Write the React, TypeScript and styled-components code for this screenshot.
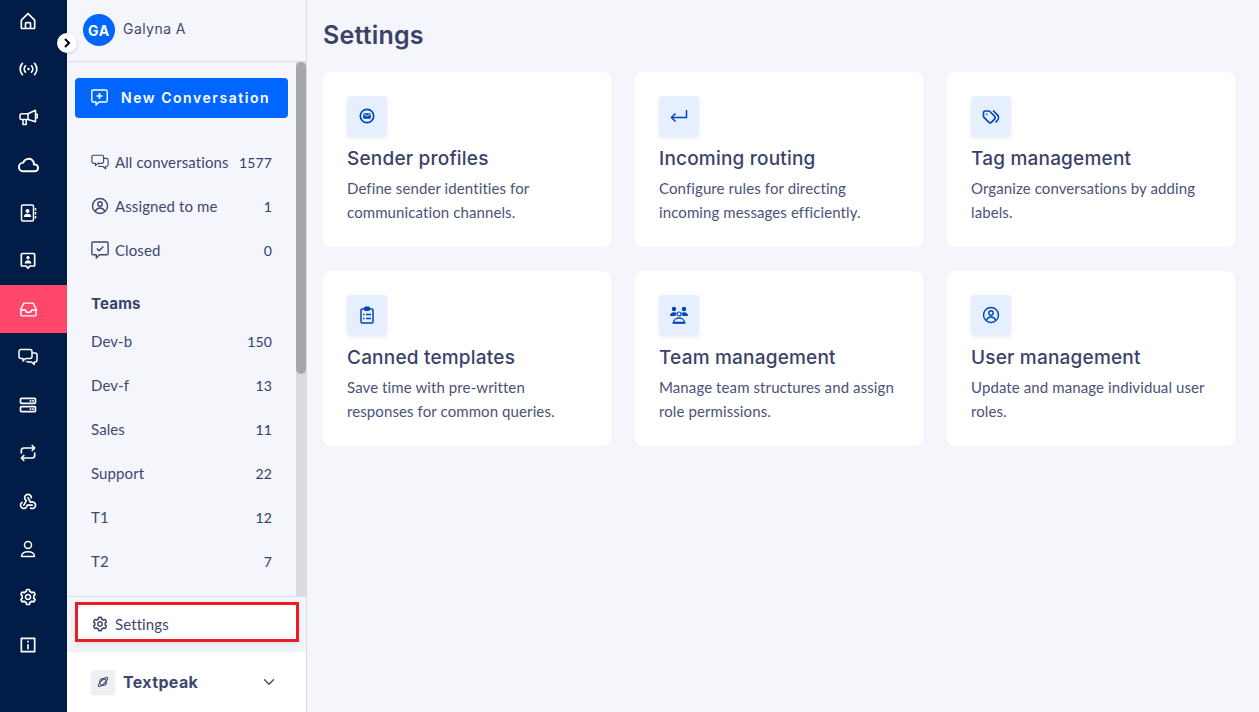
import React from 'react';
import styled, { createGlobalStyle } from 'styled-components';
import { ChevronDown } from 'lucide-react';
import { BiCog, BiHomeAlt, BiInfoSquare, BiServer, BiUserPin } from 'react-icons/bi';
import { TbCloud, TbRepeat, TbTags, TbWebhook } from 'react-icons/tb';

const HEADING = '"Inter", "Liberation Sans", sans-serif';
const BODY = '"Lato", "Noto Sans", sans-serif';
const INK = '#3f4770';

const GlobalStyle = createGlobalStyle`
  html, body { margin: 0; height: 100%; overflow: hidden; }
  * { box-sizing: border-box; }
  body { font-family: ${BODY}; color: ${INK}; background: #f4f6fb; }
`;

const Page = styled.div`
  display: flex;
  width: 100%;
  height: 712px;
  overflow: hidden;
`;

// left dark rail
const Rail = styled.nav`
  flex: 0 0 67px;
  background: #001c47;
  overflow: hidden;
`;

const RailList = styled.div`
  display: flex;
  flex-direction: column;
  margin-top: -3px;
`;

const RailItem = styled.div<{ $active?: boolean }>`
  display: flex;
  align-items: center;
  justify-content: center;
  height: 48px;
  padding-right: 11px;
  color: #fff;
  font-size: 20px;
  background: ${(p) => (p.$active ? '#ff4769' : 'transparent')};
`;

// conversations sidebar
const Sidebar = styled.aside`
  position: relative;
  flex: 0 0 240px;
  display: flex;
  flex-direction: column;
  height: 712px;
  border-right: 1px solid #d8dcea;
`;

const Toggle = styled.div`
  position: absolute;
  left: -10px;
  top: 33px;
  width: 20px;
  height: 20px;
  border-radius: 50%;
  background: #fff;
  color: #000;
  display: flex;
  align-items: center;
  justify-content: center;
  box-shadow: 0 1px 3px rgba(0, 0, 0, 0.2);
`;

const Profile = styled.div`
  flex: 0 0 62px;
  display: flex;
  align-items: flex-start;
  gap: 8px;
  padding: 14px 16px 0;
  border-bottom: 1px solid #d8dbe5;
`;

const Avatar = styled.div`
  width: 32px;
  height: 32px;
  border-radius: 50%;
  background: #0066ff;
  color: #fff;
  font: 700 14px ${HEADING};
  letter-spacing: 0.8px;
  display: flex;
  align-items: center;
  justify-content: center;
`;

const ProfileName = styled.span`
  font: 400 14px/30px ${HEADING};
  letter-spacing: 0.45px;
`;

const Scroller = styled.div`
  position: relative;
  flex: 1;
  min-height: 0;
  overflow: hidden;
  padding: 16px 8px 0;
`;

const ScrollTrack = styled.div`
  position: absolute;
  top: 0;
  right: 0;
  bottom: 0;
  width: 10px;
  background: #dadce2;
`;

const ScrollThumb = styled.div`
  height: 312px;
  border-radius: 6px;
  background: #a6a7ac;
`;

const NewButton = styled.button`
  display: flex;
  align-items: center;
  gap: 13px;
  width: 213px;
  height: 40px;
  padding: 0 16px 2px;
  border: 0;
  border-radius: 4px;
  background: #0066ff;
  color: #fff;
  font: 600 14px ${HEADING};
  letter-spacing: 1.55px;
  white-space: nowrap;
  svg { flex: none; }
`;

const NavGroup = styled.div`
  display: flex;
  flex-direction: column;
  margin-top: 22px;
`;

const NavRow = styled.div`
  display: flex;
  align-items: center;
  height: 44px;
  padding: 0 16px;
  font-size: 15px;
  letter-spacing: 0.1px;
  color: ${INK};
  width: 213px;
  svg { margin-right: 6px; flex: none; }
`;

const NavLabel = styled.span`
  flex: 1;
  white-space: nowrap;
`;

const Count = styled.span`
  font-size: 14px;
  color: #34406b;
`;

const TeamsTitle = styled.div`
  font: 700 15px/20px ${HEADING};
  letter-spacing: 0.2px;
  color: #39416a;
  padding: 0 16px;
  margin: 22px 0 5px;
`;

const SettingsPanel = styled.div`
  flex: 0 0 56px;
  background: #f4f6fb;
  padding: 5px 7px 0 8px;
  border-top: 1px solid #dcdfee;
`;

const SettingsBox = styled.div`
  display: flex;
  align-items: center;
  height: 40px;
  padding: 3px 13px 0;
  background: #fff;
  border: 3px solid #ed1c24;
  box-shadow: 0 3px 8px rgba(70, 80, 130, 0.1);
  font-size: 15px;
  letter-spacing: 0.1px;
  color: ${INK};
  svg { font-size: 18px; margin-right: 6px; }
`;

const Workspace = styled.div`
  flex: 0 0 60px;
  display: flex;
  align-items: center;
  background: #fff;
  padding: 0 28px 0 24px;
  box-shadow: 0 -1px 2px rgba(70, 80, 130, 0.06);
`;

const WorkspaceIcon = styled.div`
  width: 24px;
  height: 24px;
  border-radius: 4px;
  background: #eef0f4;
  color: #3f4770;
  display: flex;
  align-items: center;
  justify-content: center;
  margin-right: 8px;
  box-shadow: 0 1px 2px rgba(70, 80, 130, 0.12);
`;

const WorkspaceName = styled.span`
  flex: 1;
  font: 700 16px ${HEADING};
  letter-spacing: 0.35px;
  color: #3f4770;
`;

// settings area
const Main = styled.main`
  flex: 1;
  min-width: 0;
  padding: 17px 24px 0 16px;
`;

const Title = styled.h1`
  margin: 0 0 19px;
  font: 600 25px/36px ${HEADING};
  letter-spacing: 0.2px;
  color: #3b4268;
`;

const CardGrid = styled.div`
  display: grid;
  grid-template-columns: repeat(3, 288px);
  grid-auto-rows: 175px;
  gap: 24px;
`;

const Card = styled.section`
  background: #fff;
  border-radius: 8px;
  padding: 24px;
`;

const CardIcon = styled.div`
  width: 40px;
  height: 40px;
  border-radius: 4px;
  background: #e5efff;
  color: #0047b3;
  display: flex;
  align-items: center;
  justify-content: center;
  box-shadow: 0 2px 4px rgba(60, 80, 130, 0.12);
  margin-bottom: 9px;
  font-size: 20px;
`;

const CardTitle = styled.h2`
  margin: 0 0 4px;
  padding-top: 1px;
  font: 500 19px/26px ${HEADING};
  letter-spacing: 0.2px;
  color: #3b4268;
  white-space: nowrap;
`;

const CardText = styled.p`
  margin: 0;
  font-size: 15px;
  line-height: 24px;
  letter-spacing: 0.1px;
  color: #4a527a;
`;

const BroadcastIcon = () => (
  <svg width="19" height="14" viewBox="0 0 20 14" fill="none" stroke="currentColor" strokeWidth="1.800" strokeLinecap="round">
    <path d="M6.800 3.800a4.600 4.600 0 0 0 0 6.400M13.200 3.800a4.600 4.600 0 0 1 0 6.400" />
    <path d="M3.600 1a8.800 8.800 0 0 0 0 12M16.400 1a8.800 8.800 0 0 1 0 12" />
    <circle cx="10" cy="7" r="1.300" fill="currentColor" stroke="none" />
  </svg>
);

const MegaphoneIcon = () => (
  <svg width="19" height="17" viewBox="0 0 19 17" fill="none" stroke="currentColor" strokeWidth="1.500" strokeLinejoin="round">
    <path d="M2.500 4.800h6.500L16.500 1.200v11.600L9 10.500H2.500a1.500 1.500 0 0 1-1.500-1.500V6.300a1.500 1.500 0 0 1 1.500-1.500z" />
    <path d="M9 4.800v5.700M4 10.500v5h3.200v-5M16.500 5.200h1.800v3.600h-1.800" />
  </svg>
);

const ContactBookIcon = () => (
  <svg width="17" height="18" viewBox="0 0 17 18" fill="none" stroke="currentColor" strokeWidth="1.500">
    <rect x="1.500" y="1" width="12" height="16" rx="1.500" />
    <path d="M15.500 4v2.500M15.500 8v2.500M15.500 12v2.500" />
    <circle cx="7.500" cy="7" r="2" fill="currentColor" stroke="none" />
    <path d="M3.800 13c0-2 1.600-3.200 3.700-3.200s3.700 1.200 3.700 3.200z" fill="currentColor" stroke="none" />
  </svg>
);

const InboxIcon = ({ size = 17 }: { size?: number }) => (
  <svg width={size} height={size} viewBox="0 0 20 18" fill="none" stroke="currentColor" strokeWidth="1.700" strokeLinejoin="round">
    <path d="M4.500 1.500h11l3.500 7v6.500a1.500 1.500 0 0 1-1.500 1.500h-15A1.500 1.500 0 0 1 1 15V8.500z" />
    <path d="M1 9.500h5.500c0 2 1.500 3 3.500 3s3.500-1 3.500-3H19" />
  </svg>
);

const BubblesIcon = ({ size = 20, sw = 1.5 }: { size?: number; sw?: number }) => (
  <svg width={size} height={size} viewBox="0 0 20 18" fill="none" stroke="currentColor" strokeWidth={sw} strokeLinejoin="round">
    <path d="M3 1.500h9a2 2 0 0 1 2 2v5a2 2 0 0 1-2 2H7.500L5 13v-2.500H3a2 2 0 0 1-2-2v-5a2 2 0 0 1 2-2z" />
    <path d="M14.500 5H17a2 2 0 0 1 2 2v5a2 2 0 0 1-2 2h-.8v2.500L13.500 14H10a2 2 0 0 1-1.700-1" />
  </svg>
);

const PersonIcon = () => (
  <svg width="18" height="18" viewBox="0 0 18 18" fill="none" stroke="currentColor" strokeWidth="1.500" strokeLinejoin="round">
    <circle cx="9" cy="5" r="3.500" />
    <path d="M2.500 16.500c0-3 2.800-4.800 6.500-4.800s6.500 1.800 6.500 4.800z" />
  </svg>
);

const BubblePlusIcon = () => (
  <svg width="17" height="17" viewBox="0 0 17 17" fill="none" stroke="currentColor" strokeWidth="1.400" strokeLinejoin="round">
    <path d="M2 1h13a1.200 1.200 0 0 1 1.200 1.200v9.600a1.200 1.200 0 0 1-1.200 1.200H8l-3 3v-3H2a1.200 1.200 0 0 1-1.200-1.200V2.200A1.200 1.200 0 0 1 2 1z" />
    <path d="M8.500 4v6M5.500 7h6" strokeWidth="1.600" />
  </svg>
);

const BubbleCheckIcon = () => (
  <svg width="18" height="18" viewBox="0 0 17 17" fill="none" stroke="currentColor" strokeWidth="1.300" strokeLinejoin="round">
    <path d="M2 1h13a1.200 1.200 0 0 1 1.200 1.200v9.600a1.200 1.200 0 0 1-1.200 1.200H8l-3 3v-3H2a1.200 1.200 0 0 1-1.200-1.200V2.200A1.200 1.200 0 0 1 2 1z" />
    <path d="M5.500 7l2.200 2.200 4-4" />
  </svg>
);

const PlanetIcon = () => (
  <svg width="14" height="14" viewBox="0 0 14 14" fill="none" stroke="currentColor" strokeWidth="1.100">
    <circle cx="7" cy="7" r="3.400" />
    <ellipse cx="7" cy="7" rx="6.200" ry="1.800" transform="rotate(-45 7 7)" />
  </svg>
);

const MailCircle = () => (
  <svg width="16" height="16" viewBox="0 0 16 16" fill="none">
    <circle cx="8" cy="8" r="6.700" stroke="currentColor" strokeWidth="1.700" />
    <rect x="4.200" y="5.200" width="7.600" height="5.600" rx="0.800" fill="currentColor" />
    <path d="M4.600 6l3.400 2.200L11.400 6" stroke="#e5efff" strokeWidth="0.900" />
  </svg>
);

const ReturnArrow = () => (
  <svg width="18" height="14" viewBox="0 0 18 14" fill="none" stroke="currentColor" strokeWidth="1.500">
    <path d="M16.500 1v7.500H1.500" />
    <path d="M5.500 4.500l-4 4 4 4" />
  </svg>
);

const ClipboardIcon = () => (
  <svg width="14" height="18" viewBox="0 0 14 18" fill="none" stroke="currentColor" strokeWidth="1.500">
    <rect x="1" y="3" width="12" height="14" rx="1.200" />
    <rect x="4.500" y="1" width="5" height="3.500" rx="0.800" fill="currentColor" strokeWidth="1" />
    <path d="M6 8.500h5M6 12.500h5M3 8.500h1.500M3 12.500h1.500" strokeWidth="1.300" />
  </svg>
);

const TeamIcon = () => (
  <svg width="20" height="18" viewBox="0 0 20 18" fill="currentColor">
    <circle cx="5" cy="3" r="2.200" />
    <circle cx="15" cy="3" r="2.200" />
    <path d="M1 10c0-2.400 1.600-3.800 4-3.800 1.100 0 2 .3 2.800.9A3.600 3.600 0 0 0 6.500 10z" />
    <path d="M19 10c0-2.400-1.600-3.800-4-3.800-1.100 0-2 .3-2.800.9a3.600 3.600 0 0 1 1.300 2.900z" />
    <circle cx="10" cy="8" r="2" fill="none" stroke="currentColor" strokeWidth="1.200" />
    <path d="M4.500 17c0-3 2.400-5 5.500-5s5.500 2 5.500 5z" fill="none" stroke="currentColor" strokeWidth="1.300" />
    <rect x="3.500" y="15.800" width="13" height="1.700" rx=".5" />
  </svg>
);

const UserRing = () => (
  <svg width="18" height="18" viewBox="0 0 18 18" fill="none" stroke="currentColor" strokeWidth="1.400">
    <circle cx="9" cy="9" r="7.500" />
    <circle cx="9" cy="7" r="2.200" />
    <path d="M4.500 14c.6-2 2.300-3 4.500-3s3.900 1 4.500 3" />
  </svg>
);

const railIcons = [
  <BiHomeAlt />,
  <BroadcastIcon />,
  <MegaphoneIcon />,
  <TbCloud size={23} />,
  <ContactBookIcon />,
  <BiUserPin />,
  <InboxIcon />,
  <BubblesIcon />,
  <BiServer />,
  <TbRepeat />,
  <TbWebhook />,
  <PersonIcon />,
  <BiCog />,
  <BiInfoSquare />,
];

const conversationRows = [
  { icon: <BubblesIcon size={18} sw={1.300} />, label: 'All conversations', count: 1577 },
  { icon: <UserRing />, label: 'Assigned to me', count: 1 },
  { icon: <BubbleCheckIcon />, label: 'Closed', count: 0 },
];

const teamRows = [
  { label: 'Dev-b', count: 150 },
  { label: 'Dev-f', count: 13 },
  { label: 'Sales', count: 11 },
  { label: 'Support', count: 22 },
  { label: 'T1', count: 12 },
  { label: 'T2', count: 7 },
];

const cards = [
  { icon: <MailCircle />, title: 'Sender profiles', text: 'Define sender identities for communication channels.' },
  { icon: <ReturnArrow />, title: 'Incoming routing', text: 'Configure rules for directing incoming messages efficiently.' },
  { icon: <TbTags />, title: 'Tag management', text: 'Organize conversations by adding labels.' },
  { icon: <ClipboardIcon />, title: 'Canned templates', text: 'Save time with pre-written responses for common queries.' },
  { icon: <TeamIcon />, title: 'Team management', text: 'Manage team structures and assign role permissions.' },
  { icon: <UserRing />, title: 'User management', text: 'Update and manage individual user roles.' },
];

function App() {
  return (
    <Page>
      <GlobalStyle />
      <Rail>
        <RailList>
          {railIcons.map((icon, i) => (
            <RailItem key={i} $active={i === 6}>
              {icon}
            </RailItem>
          ))}
        </RailList>
      </Rail>

      <Sidebar>
        <Toggle>
          <svg width="10" height="10" viewBox="0 0 10 10" fill="none" stroke="currentColor" strokeWidth="2">
            <path d="M3 1l4 4-4 4" />
          </svg>
        </Toggle>
        <Profile>
          <Avatar>GA</Avatar>
          <ProfileName>Galyna A</ProfileName>
        </Profile>
        <Scroller>
          <NewButton>
            <BubblePlusIcon />
            New Conversation
          </NewButton>
          <NavGroup>
            {conversationRows.map((row) => (
              <NavRow key={row.label}>
                {row.icon}
                <NavLabel>{row.label}</NavLabel>
                <Count>{row.count}</Count>
              </NavRow>
            ))}
          </NavGroup>
          <TeamsTitle>Teams</TeamsTitle>
          {teamRows.map((row) => (
            <NavRow key={row.label}>
              <NavLabel>{row.label}</NavLabel>
              <Count>{row.count}</Count>
            </NavRow>
          ))}
          <ScrollTrack>
            <ScrollThumb />
          </ScrollTrack>
        </Scroller>
        <SettingsPanel>
          <SettingsBox>
            <BiCog />
            Settings
          </SettingsBox>
        </SettingsPanel>
        <Workspace>
          <WorkspaceIcon>
            <PlanetIcon />
          </WorkspaceIcon>
          <WorkspaceName>Textpeak</WorkspaceName>
          <ChevronDown size={18} strokeWidth={1.800} />
        </Workspace>
      </Sidebar>

      <Main>
        <Title>Settings</Title>
        <CardGrid>
          {cards.map((card) => (
            <Card key={card.title}>
              <CardIcon>{card.icon}</CardIcon>
              <CardTitle>{card.title}</CardTitle>
              <CardText>{card.text}</CardText>
            </Card>
          ))}
        </CardGrid>
      </Main>
    </Page>
  );
}

export default App;
